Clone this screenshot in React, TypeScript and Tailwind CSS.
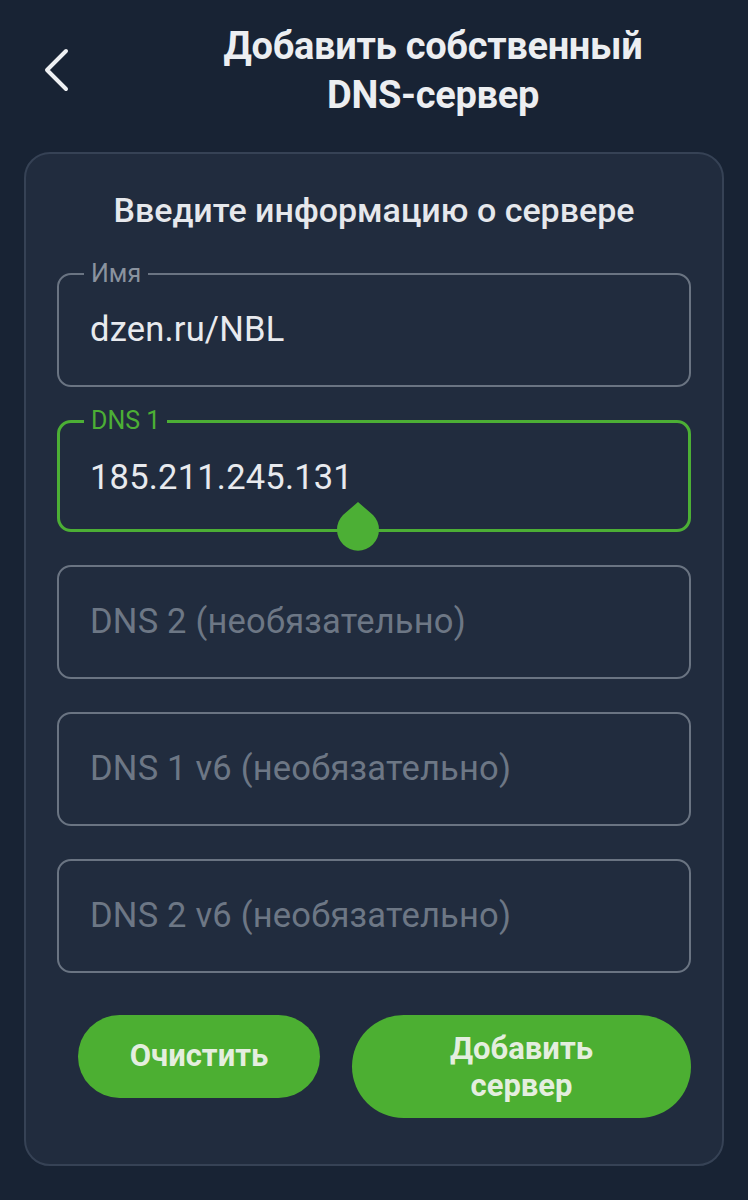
import React from 'react';

type FieldProps = {
  label?: string;
  value?: string;
  placeholder?: string;
  focused?: boolean;
};

const Field: React.FC<FieldProps> = ({ label, value, placeholder, focused }) => {
  return (
    <div
      className={
        focused
          ? 'relative h-[112px] rounded-[14px] border-[3px] border-[#4caf35] flex items-center pl-[30px] pt-[4px]'
          : 'relative h-[114px] rounded-[14px] border-2 border-[#6a7482] flex items-center pl-[31px]'
      }
    >
      {label && (
        <span
          className={
            focused
              ? 'absolute -top-[18px] left-[24px] px-[7px] bg-[#212c3e] text-[25px] leading-[32px] text-[#4caf35]'
              : 'absolute -top-[17px] left-[25px] px-[7px] bg-[#212c3e] text-[25px] leading-[32px] text-[#8a939f]'
          }
        >
          {label}
        </span>
      )}
      {value ? (
        <span className="text-[34.5px] text-[#e8eaee] tracking-[0.2px]">{value}</span>
      ) : (
        <span className="text-[34.5px] text-[#6d7785] tracking-[0.2px]">{placeholder}</span>
      )}
      {focused && (
        <svg className="absolute left-[276px] top-[77px]" width="44" height="52" viewBox="0 0 44 52">
          <path d="M22 2 L37 15 A21 21 0 1 1 7 15 Z" fill="#4caf35" />
        </svg>
      )}
    </div>
  );
};

const App: React.FC = () => {
  return (
    <div
      className="w-[748px] h-[1200px] bg-[#182334] overflow-hidden"
      style={{ fontFamily: 'Roboto, "Noto Sans", sans-serif' }}
    >
      <header className="flex items-start pt-[22px] h-[152px]">
        <button className="w-[118px] flex justify-start pl-[42px] pt-[26px]">
          <svg width="28" height="44" viewBox="0 0 28 44" fill="none">
            <path d="M24 3 L5 22 L24 41" stroke="#eef0f3" strokeWidth="4" strokeLinecap="round" strokeLinejoin="round" />
          </svg>
        </button>
        <h1 className="flex-1 text-center text-[38px] leading-[49px] font-bold text-[#eceef1] tracking-[-0.3px]">
          Добавить собственный
          <br />
          DNS-сервер
        </h1>
      </header>

      <main className="mx-[24px] rounded-[26px] border-2 border-[#364255] bg-[#212c3e] px-[31px] pt-[38px] pb-[46px]">
        <h2 className="text-center text-[34px] leading-[36px] font-medium text-[#e6e8ec]">
          Введите информацию о сервере
        </h2>

        <div className="mt-[45px] flex flex-col gap-[33px]">
          <Field label="Имя" value="dzen.ru/NBL" />
          <Field label="DNS 1" value="185.211.245.131" focused />
          <Field placeholder="DNS 2 (необязательно)" />
          <Field placeholder="DNS 1 v6 (необязательно)" />
          <Field placeholder="DNS 2 v6 (необязательно)" />
        </div>

        <div className="mt-[42px] flex items-start gap-[32px] pl-[21px]">
          <button className="w-[242px] h-[83px] rounded-full bg-[#4caf32] text-[31px] font-bold text-[#e4eedf]">
            Очистить
          </button>
          <button className="w-[339px] h-[103px] rounded-full bg-[#4caf32] text-[31px] leading-[37px] font-bold text-[#e4eedf]">
            Добавить
            <br />
            сервер
          </button>
        </div>
      </main>
    </div>
  );
};

export default App;
